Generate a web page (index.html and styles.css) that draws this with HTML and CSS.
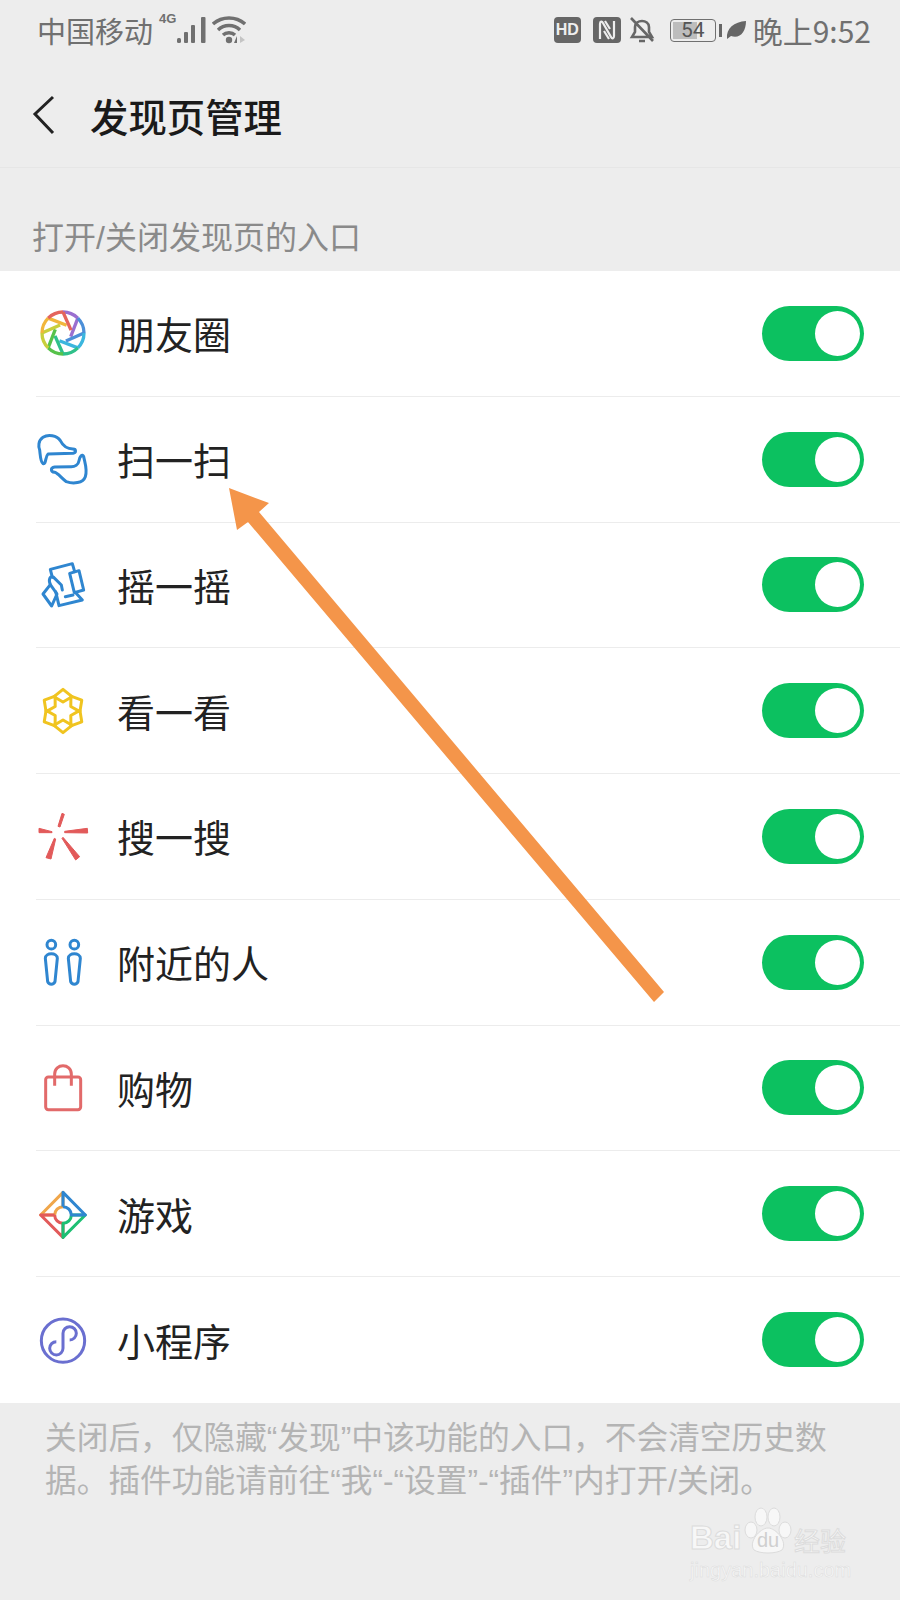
FILE: index.html

```html
<!DOCTYPE html>
<html lang="zh-CN">
<head>
  <meta charset="UTF-8" />
  <title>发现页管理</title>
  <link rel="stylesheet" href="styles.css">
</head>
<body>

  <!-- Barra de estado -->
  <div class="status">
    <div class="status-left">
      <span class="carrier">中国移动</span>
      <span class="net">4G</span>
      <svg class="signal" viewBox="0 0 29 26"><rect x="0" y="21" width="4" height="5" rx="1.5"/><rect x="7" y="15" width="4" height="11" rx="1"/><rect x="14" y="8" width="4" height="18" rx="1"/><rect x="24" y="0" width="4.5" height="26" rx="1"/></svg>
      <svg class="wifi" viewBox="0 0 34 28"><path d="M1 8 C10 0 24 0 33 8 M6 14 C12 8 22 8 28 14 M11 19 C14 16 20 16 23 19" fill="none" stroke="#707070" stroke-width="3.4"/><circle cx="17" cy="24" r="3.2" fill="#707070"/><path d="M25 20 L25 27 L22 27 Z" fill="#707070"/><path d="M28 20 L33 24 L28 27 Z" fill="#c4c4c4"/></svg>
    </div>
    <div class="status-right">
      <span class="hd">HD</span>
      <svg class="nfc" viewBox="0 0 28 26"><rect width="28" height="26" rx="4" fill="#666"/><path d="M7 22 V7 C7 4 9 4 10 6 L18 20 C19 22 21 22 21 19 V4 M12 4 L17 12 M11 14 L16 22" fill="none" stroke="#eee" stroke-width="2.2"/></svg>
      <svg class="bell" viewBox="0 0 26 28"><path d="M3 21 H23 L20 16 V11 C20 3 6 3 6 11 V16 Z M10 25 H16 M2 2 L24 25" fill="none" stroke="#666" stroke-width="2.6"/></svg>
      <div class="battery"><div class="battery-fill"></div><span>54</span></div>
      <div class="nub"></div>
      <svg class="leaf" viewBox="0 0 20 20"><path d="M1 19 C0 8 8 2 20 1 C20 12 14 19 5 16 Z" fill="#666"/></svg>
      <span class="clock">晚上9:52</span>
    </div>
  </div>

  <!-- Cabecera -->
  <div class="titlebar">
    <svg class="back" viewBox="0 0 24 40"><path d="M21 2 L3 19 L21 38" fill="none" stroke="#222" stroke-width="3"/></svg>
    <h1>发现页管理</h1>
  </div>

  <div class="section-label">打开/关闭发现页的入口</div>

  <div class="list">
    <div class="row">
      <svg class="icon" viewBox="-30 -30 60 60" fill="none" stroke-width="3.3">
        <g stroke="#9a6fd0"><path d="M0 -21 A21 21 0 0 1 14.85 -14.85"/><path d="M0 -21 L8 -2.9" transform="rotate(45)"/></g>
        <g stroke="#4c8fd8" transform="rotate(45)"><path d="M0 -21 A21 21 0 0 1 14.85 -14.85"/><path d="M0 -21 L8 -2.9" transform="rotate(45)"/></g>
        <g stroke="#3bb6de" transform="rotate(90)"><path d="M0 -21 A21 21 0 0 1 14.85 -14.85"/><path d="M0 -21 L8 -2.9" transform="rotate(45)"/></g>
        <g stroke="#2fc08a" transform="rotate(135)"><path d="M0 -21 A21 21 0 0 1 14.85 -14.85"/><path d="M0 -21 L8 -2.9" transform="rotate(45)"/></g>
        <g stroke="#56c24a" transform="rotate(180)"><path d="M0 -21 A21 21 0 0 1 14.85 -14.85"/><path d="M0 -21 L8 -2.9" transform="rotate(45)"/></g>
        <g stroke="#c8cf3c" transform="rotate(225)"><path d="M0 -21 A21 21 0 0 1 14.85 -14.85"/><path d="M0 -21 L8 -2.9" transform="rotate(45)"/></g>
        <g stroke="#f1b63c" transform="rotate(270)"><path d="M0 -21 A21 21 0 0 1 14.85 -14.85"/><path d="M0 -21 L8 -2.9" transform="rotate(45)"/></g>
        <g stroke="#e4645c" transform="rotate(315)"><path d="M0 -21 A21 21 0 0 1 14.85 -14.85"/><path d="M0 -21 L8 -2.9" transform="rotate(45)"/></g>
      </svg>
      <span class="name">朋友圈</span>
      <div class="toggle"><div class="knob"></div></div>
    </div>

    <div class="row">
      <svg class="icon" viewBox="40 417 180 180" fill="none" stroke="#2f86d0" stroke-width="9" stroke-linejoin="round">
        <path d="M160 477 C140 477 130 468 122 452 C112 436 85 432 70 442 C55 452 56 470 60 480 C62 495 62 515 70 521 C80 524 76 500 85 492 L160 490 C170 488 170 477 160 477 Z"/>
        <path d="M105 531 C92 533 92 545 105 547 C115 549 125 565 140 575 C160 582 190 580 197 560 C204 540 196 520 192 500 C188 490 180 500 178 512 C176 524 165 530 155 530 Z"/>
      </svg>
      <span class="name">扫一扫</span>
      <div class="toggle"><div class="knob"></div></div>
    </div>

    <div class="row">
      <svg class="icon" viewBox="40 795 180 180" fill="none" stroke="#2f86d0" stroke-width="9" stroke-linejoin="round" stroke-linecap="round">
        <path d="M98 862 L92 838 L158 821 L165 845"/>
        <path d="M150 850 L178 842 L192 900 L164 908 Z"/>
        <path d="M168 908 L188 930 L118 947 L108 905"/>
        <path d="M70 912 L92 884 L112 912 L96 948 Z"/>
        <path d="M92 884 C85 868 92 855 102 862 L125 885 L128 900"/>
        <path d="M137 920 L160 915"/>
      </svg>
      <span class="name">摇一摇</span>
      <div class="toggle"><div class="knob"></div></div>
    </div>

    <div class="row">
      <svg class="icon" viewBox="40 33 180 180" fill="none" stroke="#f0c420" stroke-width="9" stroke-linejoin="round">
        <path d="M130 58 L157 80 L130 96 L103 80 Z"/>
        <path d="M130 58 L157 80 L130 96 L103 80 Z" transform="rotate(60 130 123)"/>
        <path d="M130 58 L157 80 L130 96 L103 80 Z" transform="rotate(120 130 123)"/>
        <path d="M130 58 L157 80 L130 96 L103 80 Z" transform="rotate(180 130 123)"/>
        <path d="M130 58 L157 80 L130 96 L103 80 Z" transform="rotate(240 130 123)"/>
        <path d="M130 58 L157 80 L130 96 L103 80 Z" transform="rotate(300 130 123)"/>
      </svg>
      <span class="name">看一看</span>
      <div class="toggle"><div class="knob"></div></div>
    </div>

    <div class="row">
      <svg class="icon" viewBox="40 411 180 180" fill="#e25a5a" stroke="#e25a5a" stroke-width="3" stroke-linejoin="round">
        <path d="M127 433 L134 436 L121 474 L115 472 Z"/>
        <path d="M203 478 L204 492 L135 491 L135 487 Z"/>
        <path d="M58 478 L97 488 L97 491 L58 491 Z"/>
        <path d="M127 508 L130 505 L180 563 L168 573 Z"/>
        <path d="M104 508 L108 510 L94 570 L79 566 Z"/>
      </svg>
      <span class="name">搜一搜</span>
      <div class="toggle"><div class="knob"></div></div>
    </div>

    <div class="row">
      <svg class="icon" viewBox="40 789 180 180" fill="none" stroke="#2f86d0" stroke-width="9" stroke-linejoin="round">
        <circle cx="95" cy="827" r="13"/>
        <path d="M77 868 C77 850 113 850 113 868 L106 938 C102 948 88 948 84 938 Z"/>
        <circle cx="164" cy="827" r="13"/>
        <path d="M146 868 C146 850 182 850 182 868 L175 938 C171 948 157 948 153 938 Z"/>
      </svg>
      <span class="name">附近的人</span>
      <div class="toggle"><div class="knob"></div></div>
    </div>

    <div class="row">
      <svg class="icon" viewBox="40 57 180 180" fill="none" stroke="#e26a6a" stroke-width="9">
        <rect x="78" y="114" width="105" height="98" rx="8"/>
        <path d="M105 140 L105 105 C105 72 155 72 155 105 L155 140"/>
      </svg>
      <span class="name">购物</span>
      <div class="toggle"><div class="knob"></div></div>
    </div>

    <div class="row">
      <svg class="icon" viewBox="40 432 180 180" fill="none" stroke-width="9" stroke-linejoin="round">
        <path d="M130 500 L130 457 L63 525 L105 525 A25 25 0 0 1 130 500" stroke="#f0a64a"/>
        <path d="M105 525 L63 525 L130 592 L130 550 A25 25 0 0 1 105 525" stroke="#e25a5a"/>
        <path d="M155 525 L197 525 L130 592 L130 550 A25 25 0 0 0 155 525" stroke="#1dbf73"/>
        <path d="M130 500 L130 457 L197 525 L155 525 A25 25 0 0 0 130 500" stroke="#2f86d0"/>
      </svg>
      <span class="name">游戏</span>
      <div class="toggle"><div class="knob"></div></div>
    </div>

    <div class="row">
      <svg class="icon" viewBox="40 810 180 180" fill="none" stroke="#6a6fd0" stroke-width="9">
        <circle cx="130" cy="902" r="65"/>
        <path d="M110 905 A20 20 0 1 0 130 925 L130 880 A20 20 0 1 1 150 900"/>
      </svg>
      <span class="name">小程序</span>
      <div class="toggle"><div class="knob"></div></div>
    </div>
  </div>

  <p class="note">关闭后，仅隐藏“发现”中该功能的入口，不会清空历史数据。插件功能请前往“我“-“设置”-“插件”内打开/关闭。</p>

  <!-- Flecha naranja encima de la lista -->
  <svg class="arrow" viewBox="0 0 900 1600"><polygon points="229,488 269,503 259,512 664,992 654,1002 248,522 237,530" fill="#f4954a"/></svg>

  <!-- Marca de agua -->
  <div class="mark">
    <div class="mark-top">
      <span class="mark-bai">Bai</span>
      <span class="paw">
        <svg viewBox="0 0 48 48"><ellipse cx="17" cy="11" rx="6" ry="9"/><ellipse cx="30" cy="11" rx="6" ry="9"/><ellipse cx="7" cy="24" rx="6" ry="8"/><ellipse cx="41" cy="24" rx="6" ry="8"/><path d="M24 22 C32 22 44 36 38 44 C32 48 16 48 10 44 C4 36 16 22 24 22 Z"/></svg>
        <span class="mark-du">du</span>
      </span>
      <span class="mark-cn">经验</span>
    </div>
    <div class="mark-url">jingyan.baidu.com</div>
  </div>

</body>
</html>
```

FILE: styles.css

```css
html, body {
  margin: 0;
  padding: 0;
}
body {
  position: relative;
  width: 900px;
  height: 1600px;
  overflow: hidden;
  background-color: #ededed;
  font-family: "Noto Sans CJK SC", "Noto Sans", sans-serif;
}

/* barra de estado */
.status {
  height: 62px;
  box-sizing: border-box;
  padding: 0 29px 2px 37px;
  display: flex;
  justify-content: space-between;
  align-items: center;
  color: #707070;
}
.status-left, .status-right {
  display: flex;
  align-items: center;
}
.carrier {
  font-size: 29px;
  line-height: 40px;
}
.net {
  align-self: flex-start;
  width: 18px;
  margin: 2px 0 0 6px;
  font-family: "Liberation Sans", sans-serif;
  font-size: 13px;
  font-weight: bold;
  line-height: 14px;
}
.signal {
  width: 29px;
  height: 26px;
  fill: #707070;
}
.wifi {
  width: 34px;
  height: 28px;
  margin-left: 6px;
}
.hd {
  width: 27px;
  height: 26px;
  border-radius: 4px;
  background-color: #666;
  color: #eee;
  font-family: "Liberation Sans", sans-serif;
  font-size: 16px;
  font-weight: bold;
  line-height: 26px;
  text-align: center;
}
.nfc {
  width: 28px;
  height: 26px;
  margin-left: 12px;
}
.bell {
  width: 26px;
  height: 28px;
  margin-left: 8px;
}
.battery {
  position: relative;
  width: 46px;
  height: 23px;
  margin-left: 15px;
  border: 1px solid #707070;
  border-radius: 4px;
  box-sizing: border-box;
  text-align: center;
  font-family: "Roboto", sans-serif;
  font-size: 21px;
  line-height: 21px;
  color: #555;
}
.battery-fill {
  position: absolute;
  left: 2px;
  top: 2px;
  bottom: 2px;
  width: 24px;
  background-color: #bdbdbd;
}
.battery span {
  position: relative;
}
.nub {
  width: 3px;
  height: 13px;
  margin-left: 3px;
  background-color: #666;
}
.leaf {
  width: 20px;
  height: 20px;
  margin-left: 4px;
}
.clock {
  margin-left: 7px;
  font-size: 30px;
  line-height: 40px;
}

/* cabecera */
.titlebar {
  height: 105px;
  display: flex;
  align-items: center;
  border-bottom: 1px solid #e6e6e6;
  padding-left: 32px;
}
.back {
  width: 24px;
  height: 40px;
  margin-top: 1px;
}
h1 {
  margin: 0 0 0 34px;
  font-size: 38.4px;
  font-weight: 500;
  color: #1a1a1a;
}

.section-label {
  height: 103px;
  box-sizing: border-box;
  padding: 47px 0 0 32px;
  font-family: "Liberation Sans", "Noto Sans CJK SC", sans-serif;
  font-size: 32px;
  line-height: 46px;
  color: #8a8a8a;
}

/* lista */
.list {
  background-color: #fff;
}
.row {
  height: 125.75px;
  box-sizing: border-box;
  margin-left: 36px;
  padding-right: 36px;
  display: flex;
  align-items: center;
  border-bottom: 1px solid #ececec;
}
.row:last-child {
  border-bottom: none;
}
.icon {
  width: 60px;
  height: 60px;
  margin-left: -3px;
}
.name {
  flex: 1;
  margin-left: 24px;
  font-size: 38px;
  line-height: 50px;
  color: #222;
}
.toggle {
  width: 102px;
  height: 55px;
  padding: 5px 4px;
  box-sizing: border-box;
  border-radius: 28px;
  background-color: #0cc160;
  display: flex;
  justify-content: flex-end;
}
.knob {
  width: 45px;
  height: 45px;
  border-radius: 50%;
  background-color: #fff;
}

.note {
  margin: 0;
  padding: 14px 60px 0 45px;
  font-family: "Liberation Sans", "Noto Sans CJK SC", sans-serif;
  font-size: 31.7px;
  line-height: 43px;
  color: #b4b4b4;
}

/* flecha */
.arrow {
  position: absolute;
  left: 0;
  top: 0;
  width: 900px;
  height: 1600px;
}

/* marca de agua */
.mark {
  position: absolute;
  left: 690px;
  top: 1504px;
  width: 165px;
  color: #f7f7f7;
}
.mark-top {
  display: flex;
  align-items: flex-end;
  height: 52px;
}
.mark-bai {
  width: 54px;
  font-family: "Liberation Sans", sans-serif;
  font-size: 33px;
  font-weight: bold;
  line-height: 36px;
  -webkit-text-stroke: 1px #dcdcdc;
}
.paw {
  position: relative;
  width: 48px;
  height: 50px;
}
.paw svg {
  width: 48px;
  height: 48px;
  fill: #f7f7f7;
  stroke: #dcdcdc;
}
.mark-du {
  position: absolute;
  left: 13px;
  bottom: 6px;
  font-family: "Liberation Sans", sans-serif;
  font-size: 20px;
  line-height: 20px;
  color: #cfcfcf;
}
.mark-cn {
  margin-left: 2px;
  font-size: 26px;
  line-height: 32px;
  -webkit-text-stroke: 1px #dcdcdc;
}
.mark-url {
  margin-top: 2px;
  font-family: "Liberation Sans", sans-serif;
  font-size: 20px;
  line-height: 24px;
  -webkit-text-stroke: 0.5px #dcdcdc;
}
```
